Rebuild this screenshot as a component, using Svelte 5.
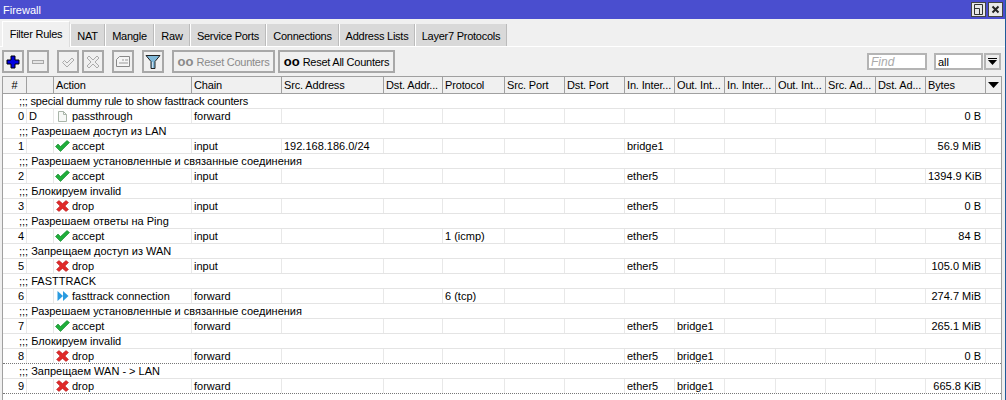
<script>
  const cols = [{n:'#',w:24,a:'c'},{n:'',w:27},{n:'Action',w:138},{n:'Chain',w:90},{n:'Src. Address',w:102},{n:'Dst. Addr...',w:59},{n:'Protocol',w:62},{n:'Src. Port',w:60},{n:'Dst. Port',w:60},{n:'In. Inter...',w:50},{n:'Out. Int...',w:50},{n:'In. Inter...',w:51},{n:'Out. Int...',w:50},{n:'Src. Ad...',w:50},{n:'Dst. Ad...',w:50},{n:'Bytes',w:60},{n:'',w:15}];
  const tpl = cols.map(c=>c.w+'px').join(' ');
  const rules = [
    {c:'special dummy rule to show fasttrack counters',f:'D',i:'pass',a:'passthrough',ch:'forward',bytes:'0 B',lat:true},
    {c:'Разрешаем доступ из LAN',i:'ok',a:'accept',ch:'input',src:'192.168.186.0/24',inI:'bridge1',bytes:'56.9 MiB'},
    {c:'Разрешаем установленные и связанные соединения',i:'ok',a:'accept',ch:'input',inI:'ether5',bytes:'1394.9 KiB'},
    {c:'Блокируем invalid',i:'x',a:'drop',ch:'input',inI:'ether5',bytes:'0 B'},
    {c:'Разрешаем ответы на Ping',i:'ok',a:'accept',ch:'input',p:'1 (icmp)',inI:'ether5',bytes:'84 B'},
    {c:'Запрещаем доступ из WAN',i:'x',a:'drop',ch:'input',inI:'ether5',bytes:'105.0 MiB'},
    {c:'FASTTRACK',i:'ft',a:'fasttrack connection',ch:'forward',p:'6 (tcp)',bytes:'274.7 MiB'},
    {c:'Разрешаем установленные и связанные соединения',i:'ok',a:'accept',ch:'forward',inI:'ether5',out:'bridge1',bytes:'265.1 MiB'},
    {c:'Блокируем invalid',i:'x',a:'drop',ch:'forward',inI:'ether5',out:'bridge1',bytes:'0 B',dot:true},
    {c:'Запрещаем WAN - > LAN',i:'x',a:'drop',ch:'forward',inI:'ether5',out:'bridge1',bytes:'665.8 KiB',dot:true}
  ];
  const tabs = [{t:'NAT',w:35},{t:'Mangle',w:49},{t:'Raw',w:36},{t:'Service Ports',w:76},{t:'Connections',w:73},{t:'Address Lists',w:76},{t:'Layer7 Protocols',w:92}];
</script>

<div class="win">
  <header class="title">
    <span>Firewall</span>
    <div class="winbtns">
      <button class="wb" aria-label="restore"><svg width="13" height="13" viewBox="0 0 13 13"><path d="M2.500 1.500h8v10h-8zM2.500 5.500h5v6" fill="none" stroke="#333"/></svg></button>
      <button class="wb" aria-label="close"><svg width="13" height="13" viewBox="0 0 13 13"><path d="M3.500 3.500l6 6M9.500 3.500l-6 6" stroke="#222" stroke-width="2"/></svg></button>
    </div>
  </header>

  <nav class="tabs">
    <div class="tab active">Filter Rules</div>
    {#each tabs as t}<div class="tab" style="width:{t.w}px">{t.t}</div>{/each}
  </nav>

  <div class="toolbar">
    <button class="tb" aria-label="add"><svg width="14" height="14" viewBox="0 0 14 14"><path d="M5 1h4v4h4v4H9v4H5V9H1V5h4z" fill="#0000e0" stroke="#000"/></svg></button>
    <button class="tb" aria-label="remove"><svg width="14" height="8" viewBox="0 0 14 8"><rect x="1.500" y="2.500" width="11" height="3" fill="#e4e4e4" stroke="#a8a8a8"/></svg></button>
    <button class="tb gap" aria-label="enable"><svg width="14" height="14" viewBox="0 0 14 14"><path d="M1.500 7.500l2-2 2.500 2.500 5-5 2 2-7 7z" fill="#eee" stroke="#aaa"/></svg></button>
    <button class="tb" aria-label="disable"><svg width="14" height="14" viewBox="0 0 14 14"><path d="M3 1l4 4 4-4 2 2-4 4 4 4-2 2-4-4-4 4-2-2 4-4-4-4z" fill="#eee" stroke="#aaa"/></svg></button>
    <button class="tb gap" aria-label="comment"><svg width="16" height="14" viewBox="0 0 16 14"><path d="M4.500 1.500h10v10h-13v-7z" fill="#f4f4f4" stroke="#888"/><path d="M7 5h2M10 5h3M4 8h9" stroke="#999"/></svg></button>
    <button class="tb gap" aria-label="filter"><svg width="16" height="16" viewBox="0 0 16 16"><path d="M1 1.500h14l-5 6v7h-4v-7z" fill="#7fb8d8" stroke="#222"/><path d="M7.500 8v6" stroke="#cde" /></svg></button>
    <button class="tb text dis gap"><b>oo</b><span>Reset Counters</span></button>
    <button class="tb text all"><b>oo</b><span>Reset All Counters</span></button>
    <div class="tool-right">
      <div class="field find">Find</div>
      <div class="field sel">all</div>
      <button class="drop" aria-label="dropdown"><svg width="11" height="10" viewBox="0 0 11 10"><path d="M1 1.500h9" stroke="#000"/><path d="M1 3h9L5.500 8z" fill="#000"/></svg></button>
    </div>
  </div>

  <div class="table">
    <div class="row head" style="grid-template-columns:{tpl}">
      {#each cols as c, i}
        <div class="h" class:center={c.a==='c' || i===cols.length-1} class:last={i===cols.length-1}>{#if i===cols.length-1}<svg width="13" height="7" viewBox="0 0 13 7"><path d="M1 0h11L6.500 6z" fill="#000"/></svg>{:else}{c.n}{/if}</div>
      {/each}
    </div>
    {#each rules as r, idx}
      <div class="comment" class:lat={r.lat}>;;; {r.c}</div>
      <div class="row data" class:dot={r.dot} style="grid-template-columns:{tpl}">
        <div class="c num">{idx}</div>
        <div class="c">{r.f ?? ''}</div>
        <div class="c act">
          <span class="ic">
            {#if r.i==='ok'}
              <svg width="15" height="12" viewBox="0 0 15 12"><path d="M.5 6.500l2.500-2.500L5.500 6.500 12 .5l2.500 2L5.500 11.500z" fill="#1fae3a" stroke="#0f7f28" stroke-width=".6"/></svg>
            {:else if r.i==='x'}
              <span class="xw"><svg width="13" height="12" viewBox="0 0 13 12"><path d="M.5 2.500L3 .5l3.500 3L10 .5l2.500 2L9 6l3.500 3.500L10 11.500 6.500 8.500 3 11.500.5 9.500 4 6z" fill="#e02b2b" stroke="#b31a1a" stroke-width=".5"/></svg></span>
            {:else if r.i==='ft'}
              <span class="fw"><svg width="12" height="12" viewBox="0 0 12 12"><path d="M.5 1l5.500 5-5.500 5z" fill="#2a9be0"/><path d="M6 1l5.500 5L6 11z" fill="#2a9be0"/></svg></span>
            {:else}
              <span class="pw"><svg width="9" height="11" viewBox="0 0 9 11"><path d="M.5.500h5l3 3v7h-8z" fill="#f6f8f6" stroke="#a9b5a9"/><path d="M5.500.500v3h3" fill="none" stroke="#a9b5a9"/></svg></span>
            {/if}
          </span>{r.a}
        </div>
        <div class="c">{r.ch}</div>
        <div class="c">{r.src ?? ''}</div>
        <div class="c"></div>
        <div class="c">{r.p ?? ''}</div>
        <div class="c"></div>
        <div class="c"></div>
        <div class="c">{r.inI ?? ''}</div>
        <div class="c">{r.out ?? ''}</div>
        <div class="c"></div>
        <div class="c"></div>
        <div class="c"></div>
        <div class="c"></div>
        <div class="c num bytes">{r.bytes}</div>
        <div class="c end"></div>
      </div>
    {/each}
  </div>
</div>

<style>
  :global(body){margin:0;background:#fff}
  .win{width:1006px;height:400px;box-sizing:border-box;border-right:1px solid #1f5c99;background:#f0f0f0;font:11px/15px "Liberation Sans",sans-serif;color:#000;display:flex;flex-direction:column;overflow:hidden}
  .title{height:19px;background:#4a4ecf;color:#fff;display:flex;justify-content:space-between;align-items:center;padding-left:3px;flex:none}
  .title>span{padding-top:2px}
  .winbtns{display:flex;gap:2px;padding-right:2px}
  .wb{width:15px;height:15px;border:1px solid #444;background:#e8e8e8;padding:0;display:flex;align-items:center;justify-content:center}
  .tabs{height:28px;display:flex;align-items:flex-end;padding-left:2px;flex:none;border-bottom:1px solid #fff;box-sizing:border-box}
  .tab{height:22px;background:#d9d9d9;line-height:24px;letter-spacing:-.25px;text-align:center;border-right:1px solid #bbb;border-left:1px solid #fff;box-sizing:border-box;white-space:nowrap}
  .tab.active{width:68px;height:26px;background:#f0f0f0;border-top:1px solid #fff;margin-bottom:-1px;line-height:25px;border-right-color:#ddd}
  .toolbar{height:29px;display:flex;align-items:center;padding-left:2px;flex:none}
  .tb{width:22px;height:23px;border:2px solid #a8a8a8;background:#f0f0f0;padding:0;margin-right:3px;display:flex;align-items:center;justify-content:center;box-sizing:border-box;font:11px "Liberation Sans",sans-serif;color:#000;letter-spacing:-.25px}
  .tb.gap{margin-left:5px}
  .tb.text{width:103px;white-space:nowrap;gap:3px}
  .tb.text b{font-size:13px;letter-spacing:0}
  .tb.all{width:117px;margin-right:0}
  .tb.dis{color:#8a8a8a}
  .tool-right{margin-left:auto;display:flex;align-items:center;padding-right:4px}
  .field{height:17px;border:2px solid #b4b4b4;background:#fff;box-sizing:border-box;line-height:14px;padding-left:2px}
  .find{width:60px;color:#aaa;font-style:italic;margin-right:7px;font-size:12px}
  .sel{width:49px}
  .drop{width:17px;height:17px;border:2px solid #b4b4b4;background:#eee;padding:0;margin-left:1px;display:flex;align-items:center;justify-content:center;box-sizing:border-box}
  .table{flex:1;margin-left:2px;margin-right:3px;background:#fff;border-left:1px solid #a0a0a0;border-right:1px solid #a0a0a0}
  .row{display:grid}
  .head{height:18px;background:#f0f0f0;border-top:1px solid #a0a0a0;border-bottom:1px solid #a0a0a0;box-sizing:border-box}
  .h{border-right:1px solid #a0a0a0;padding:1px 0 0 2px;line-height:15px;letter-spacing:-.15px;white-space:nowrap;overflow:hidden;box-sizing:border-box;display:flex;align-items:center}
  .h.center{justify-content:center;padding-left:0}
  .h.last{border-right:0}
  .comment{height:15px;padding-left:16px;line-height:14px;box-sizing:border-box;white-space:nowrap;border-bottom:1px solid #e4e4e4}
  .comment.lat{letter-spacing:-.18px}
  .data{height:15px;box-sizing:border-box;border-bottom:1px solid #e4e4e4}
  .c{border-right:1px solid #e8e8e8;padding:0 2px;line-height:14px;white-space:nowrap;box-sizing:border-box}
  .c.end{border-right:0}
  .num{text-align:right}
  .bytes{padding-right:4px}
  .act{display:flex;align-items:center;padding-left:1px}
  .ic{width:17px;display:inline-flex;flex:none}
  .xw{padding:0 0 0 1px;display:flex}
  .fw{padding-left:2px;display:flex}
  .pw{padding-left:3px;display:flex}
  .dot{border-bottom:1px dotted #777}
</style>
